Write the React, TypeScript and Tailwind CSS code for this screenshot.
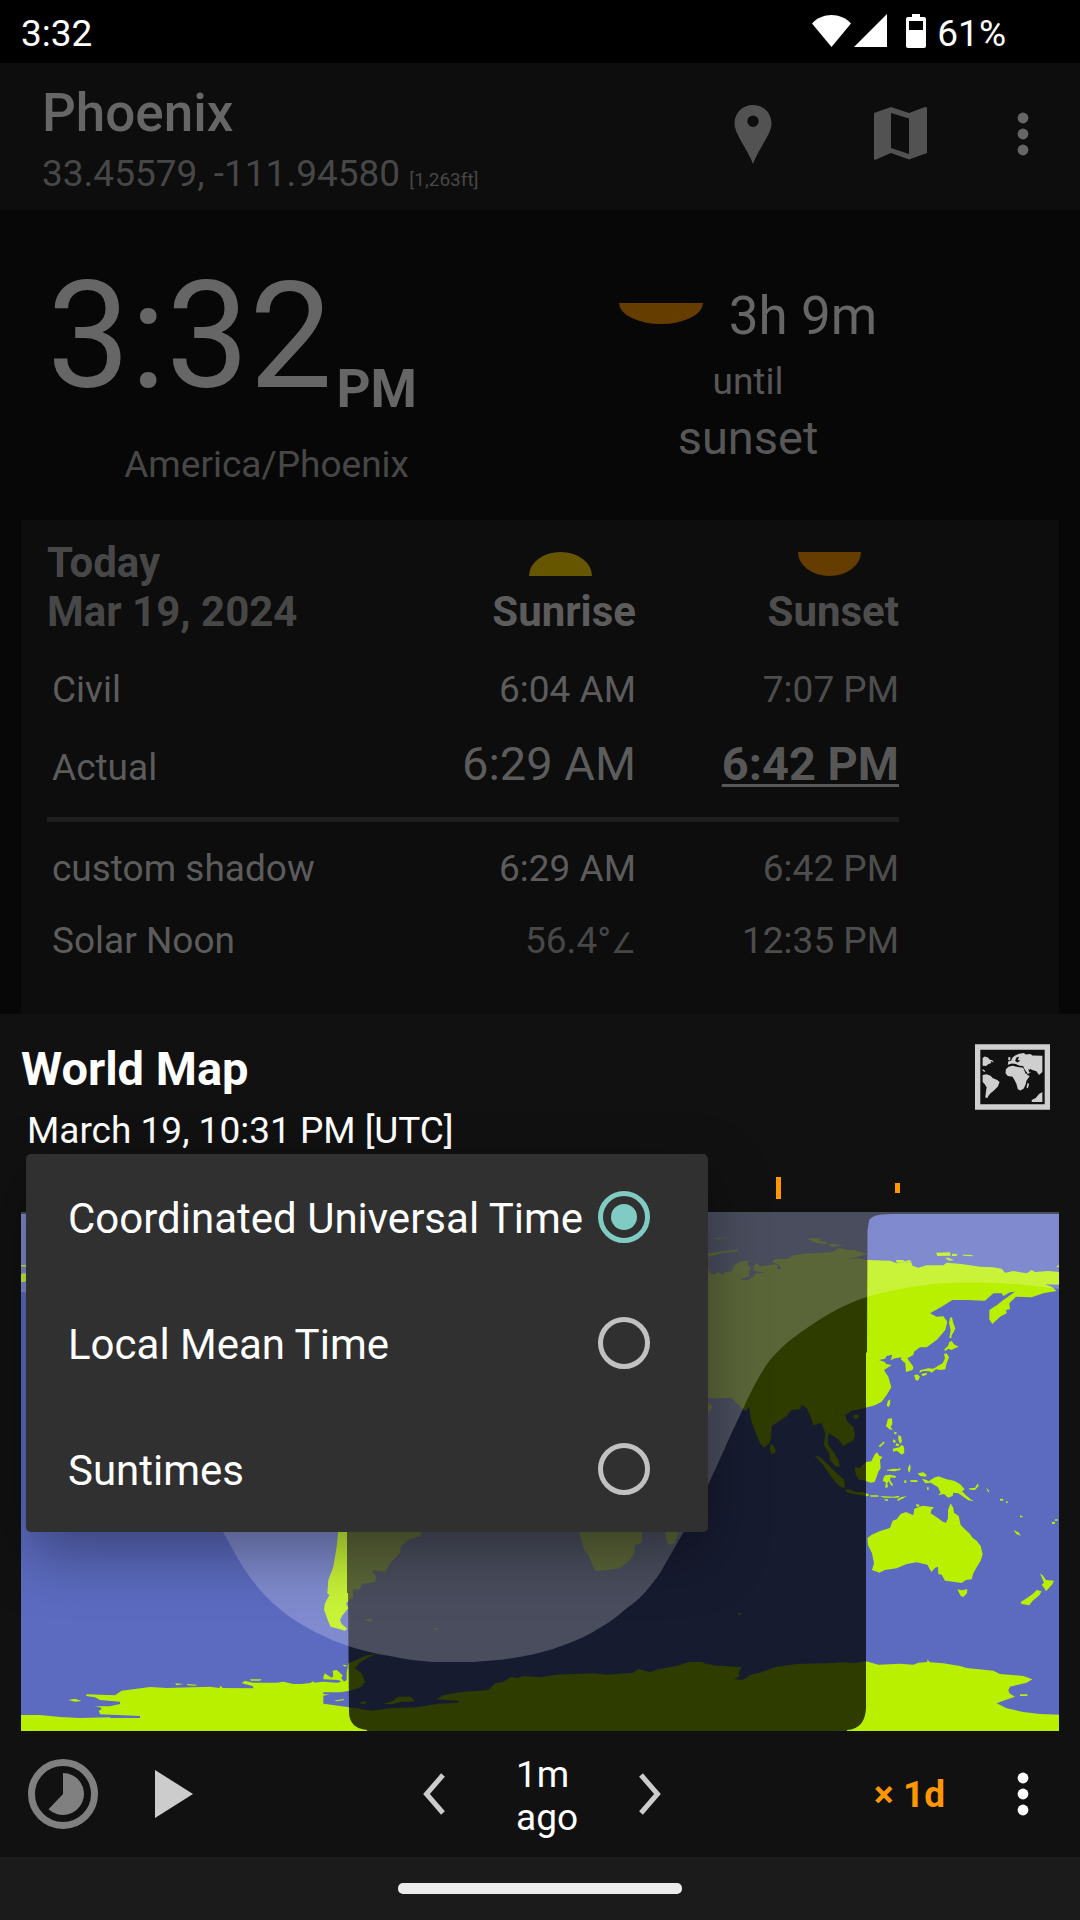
import { useState } from "react";

const zones = ["Coordinated Universal Time", "Local Mean Time", "Suntimes"];

function Dots({ className }: { className: string }) {
  return (
    <svg viewBox="0 0 12 44" className={"h-[44px] w-[12px] " + className} fill="currentColor">
      <circle cx="6" cy="6" r="5.4" />
      <circle cx="6" cy="22" r="5.4" />
      <circle cx="6" cy="38" r="5.4" />
    </svg>
  );
}

function StatusBar() {
  return (
    <div className="flex h-[63px] items-center bg-black pt-1 pr-[74px] pl-[21px] text-[37px] text-white">
      <span>3:32</span>
      <svg viewBox="0 0 114 36" className="-mt-1.5 ml-auto h-[36px] w-[114px]" fill="#fff">
        <path d="M0 10.500C10-1 29-1 39 10.500L19.500 34Z" />
        <path d="M75 1V34H42Z" />
        <path
          fillRule="evenodd"
          d="M100 1h8v3h4q2 0 2 2V33q0 2-2 2H96q-2 0-2-2V6q0-2 2-2h4ZM97 8v9h14V8Z"
        />
      </svg>
      <span className="ml-[11px]">61%</span>
    </div>
  );
}

function AppBar() {
  return (
    <header className="flex h-[147px] items-start bg-[#0d0d0d] pr-[51px] pl-[42px]">
      <div className="pt-5">
        <h1 className="text-[53px] leading-[60px] font-medium text-[#666]">Phoenix</h1>
        <p className="text-[37px] leading-[62px] text-[#474747]">
          33.45579, -111.94580 <span className="text-[19px]">[1,263ft]</span>
        </p>
      </div>
      <button type="button" aria-label="Location" className="mt-[42px] ml-auto">
        <svg viewBox="0 0 38 59" className="h-[59px] w-[38px]" fill="#525252">
          <path
            fillRule="evenodd"
            d="M19 0C8.500 0 .5 8 .5 18.500C.5 29 13 43 19 59C25 43 37.500 29 37.500 18.500C37.500 8 29.500 0 19 0ZM19 10.500a5.700 5.700 0 1 1 0 11.400a5.700 5.700 0 1 1 0-11.400Z"
          />
        </svg>
      </button>
      <button type="button" aria-label="Map" className="mt-[44px] ml-[102px]">
        <svg viewBox="0 0 53 53" className="h-[53px] w-[53px]" fill="#525252">
          <path
            fillRule="evenodd"
            d="M0 6L17 0L35 6L51 0Q53 0 53 1V46L35 52.500L17 46L2 52.500Q0 53 0 52ZM17 6V41L35 47V11.500Z"
          />
        </svg>
      </button>
      <button type="button" aria-label="More options" className="mt-[49px] ml-[90px]">
        <Dots className="text-[#666]" />
      </button>
    </header>
  );
}

function Setting({ className }: { className: string }) {
  return (
    <svg viewBox="0 0 84 21" preserveAspectRatio="none" className={className}>
      <path d="M0 0H84A42 21 0 0 1 0 0Z" fill="#663d00" />
    </svg>
  );
}

function Rising({ className }: { className: string }) {
  return (
    <svg viewBox="0 0 84 21" preserveAspectRatio="none" className={className}>
      <path d="M0 21H84A42 21 0 0 0 0 21Z" fill="#665600" />
    </svg>
  );
}

function Clock() {
  return (
    <section className="flex h-[310px] items-start px-[21px] text-[#666]">
      <div className="flex w-[416px] shrink-0 flex-col items-start pt-[41px] pl-[26px]">
        <div className="flex flex-col items-end">
          <div className="flex items-end gap-1">
            <span className="text-[148px] leading-[172px]">3:32</span>
            <span className="text-[53px] leading-[68px] font-bold">PM</span>
          </div>
          <p className="mt-[18px] pr-2 text-[37px] leading-[48px] text-[#474747]">America/Phoenix</p>
        </div>
      </div>
      <div className="flex flex-1 flex-col items-center pt-[76px]">
        <div className="flex items-center gap-[26px] text-[53px] leading-[60px]">
          <Setting className="mb-1.5 h-[21px] w-[84px]" />
          <span>3h 9m</span>
        </div>
        <p className="mt-3 text-[37px] leading-[48px] text-[#575757]">until</p>
        <p className="mt-1 text-[47px] leading-[56px] text-[#575757]">sunset</p>
      </div>
    </section>
  );
}

function SunTable() {
  return (
    <section className="mx-[21px] bg-[#0d0d0d] pt-[18px] pb-[37px] pl-[26px] text-[37px] text-[#5c5c5c]">
      <table className="w-[852px] table-fixed border-collapse">
        <colgroup>
          <col className="w-[325px]" />
          <col className="w-[264px]" />
          <col className="w-[263px]" />
        </colgroup>
        <thead>
          <tr className="text-[42px] leading-[49px]">
            <th className="pb-[18px] text-left align-bottom font-bold text-[#474747]">
              Today
              <br />
              Mar 19, 2024
            </th>
            <th className="pb-[18px] text-right align-bottom font-bold">
              <span className="inline-flex flex-col items-center align-bottom">
                <Rising className="mr-2 mb-[11px] h-[24px] w-[63px]" />
                Sunrise
              </span>
            </th>
            <th className="pb-[18px] text-right align-bottom font-bold text-[#4d4d4d]">
              <span className="inline-flex flex-col items-center align-bottom">
                <Setting className="mr-2 mb-[11px] h-[24px] w-[63px]" />
                Sunset
              </span>
            </th>
          </tr>
        </thead>
        <tbody>
          <tr className="h-[72px]">
            <th className="pl-[5px] text-left font-normal">Civil</th>
            <td className="text-right">6:04 AM</td>
            <td className="text-right text-[#4d4d4d]">7:07 PM</td>
          </tr>
          <tr className="h-[80px] align-baseline">
            <th className="pl-[5px] text-left font-normal">Actual</th>
            <td className="text-right text-[47px] leading-[76px]">6:29 AM</td>
            <td className="text-right text-[47px] leading-[76px] font-bold text-[#575757] underline decoration-3 underline-offset-4">
              6:42 PM
            </td>
          </tr>
          <tr>
            <td colSpan={3} className="h-[27px] p-0">
              <hr className="border-t-[5px] border-[#1f1f1f]" />
            </td>
          </tr>
          <tr className="h-[72px]">
            <th className="pl-[5px] text-left font-normal">custom shadow</th>
            <td className="text-right">6:29 AM</td>
            <td className="text-right text-[#4d4d4d]">6:42 PM</td>
          </tr>
          <tr className="h-[72px]">
            <th className="pl-[5px] text-left font-normal">Solar Noon</th>
            <td className="text-right text-[#474747]">
              56.4°<span className="text-[28px]">∠</span>
            </td>
            <td className="text-right text-[#4d4d4d]">12:35 PM</td>
          </tr>
        </tbody>
      </table>
    </section>
  );
}

function MapModeIcon() {
  return (
    <svg viewBox="103 72 226 198" className="h-[66px] w-[75px]" fill="#cfcfcf">
      <path fillRule="evenodd" d="M103 72H329V270H103ZM119 89V253H313V89Z" />
      <path d="M126 114L132 109L142 112L147 118L156 121L160 127L150 123L152 129L144 132L136 138L126 137Z" />
      <path d="M126 147L134 153L132 156L126 152Z" />
      <path d="M126 165L138 163L150 167L156 174L170 180L177 186L172 200L160 212L150 220L143 228L140 235L134 232L136 216L138 202L132 192L126 186Z" />
      <path d="M196 148L204 140L216 137L232 141L248 143L254 155L262 166L268 168L258 182L256 192L250 206L240 212L232 208L228 192L222 180L216 170L202 168L195 160Z" />
      <path d="M203 124L212 122L216 112L224 106L236 101L250 99L256 103L270 102L276 106L306 107V156L296 165L288 154L276 150L268 146L270 158L262 162L252 148L248 138L238 137L226 132L214 130L202 134Z" />
      <path d="M204 110L210 112L209 121L203 120Z" />
      <path d="M262 188L266 192L262 206L258 202Z" />
      <path d="M274 240L286 234L296 222L306 216V246H274Z" />
      <path d="M228 112L236 110L232 120L240 122L230 127L224 122ZM250 146L260 160L256 162ZM264 146L272 154L266 158Z" fill="#111" />
    </svg>
  );
}

function WorldMap() {
  return (
    <svg viewBox="0 0 1038 577" className="block w-full" role="img" aria-label="World map with daylight and moonlight">
      <g fill="#ff9800">
        <rect x="755" y="23" width="5" height="22" />
        <rect x="874" y="29" width="5" height="10" />
      </g>
      <g transform="translate(0 58)">
        <rect width="1038" height="519" fill="#5c6bc0" />
        <g fill="#b9f000">
          <path d="M0 62L3 61L8 63V69L2 70H0ZM0 53H8V54.500H0Z" />
          <g transform="translate(639 -62) scale(.33333)">
            <path d="M120 370L145 358L150 370L165 374L170 367L192 374L194 366L215 364L222 345L240 335L265 332L262 345L272 352L266 370L270 378L240 387L248 391L264 391L282 378L290 368L312 370L315 380L312 366L285 364L278 352L290 338L300 350L318 346L325 355L316 348L340 343L355 345L350 357L362 358L360 346L335 335L345 328L385 326L395 318L430 311L515 307L540 294L560 300L580 299L622 312L555 331L590 325L622 330L690 332L710 340L730 338L755 338L757 347L775 353L800 346L850 346L860 338L905 342L960 350L1000 352L1025 356L1035 368L1060 363L1100 370L1115 360L1125 366L1165 363L1198 366V404L1155 403L1175 410L1190 423L1150 430L1115 442L1068 440L1048 460L1050 478L1038 480L1040 490L1020 500L997 522L988 508V480L1010 466L1030 450L1065 425L1050 427L1030 438L1025 430L1000 430L975 452L920 450L877 450L845 470L810 490L830 500L850 499L862 515L856 540L830 570L800 592L780 592L762 605L760 615L742 625L747 632L760 650L758 660L738 666L736 640L722 628L725 622L705 625L692 630L697 614L680 618L675 626L657 630L675 636L678 642L695 645L672 660L685 680L694 712L680 735L665 755L645 766L622 772L600 778L575 782L556 795L560 812L580 832L585 855L580 870L550 888L535 868L508 850L503 862L505 885L520 905L535 930L540 950L525 948L510 930L508 910L492 885L496 850L484 818L460 826L452 800L440 775L425 765L420 778L395 780L380 798L335 828L333 865L328 880L312 893L300 880L280 830L270 795L268 772L255 783L230 760L215 744L150 745L120 742Z" />
            <path d="M120 745L145 760L157 772L144 788L120 790Z" />
            <path d="M130 312L180 305L232 299L235 304L190 308L144 321Z" />
            <path d="M442 268L460 263L480 266L478 273L502 276L500 283L470 278ZM505 284L520 281L550 287L530 289L515 290Z" />
            <path d="M160 265h24v2h-24ZM190 263h12v2h-12ZM828 308L870 307L872 317L832 318ZM876 311L892 312L890 318H876ZM907 314L938 315L937 319L910 317ZM855 324L866 323L882 331L868 332Z" />
            <path d="M708 330L728 330L735 334L750 330L755 338H710ZM1188 350L1197 345V352Z" />
            <path d="M870 503L876 502L880 520L886 535L880 548L875 555L874 565L868 563L872 540L867 520ZM868 576L875 573L882 583L896 590L885 595L875 600L865 596L855 604L853 598L864 588ZM852 612L860 610L867 622L860 640L856 658L842 660L828 658L815 668L808 664L790 663L778 668L780 661L805 655L820 656L838 645L848 640L855 625ZM762 676L772 673L780 680L774 692L767 690ZM784 672L800 668L800 674L788 679Z" />
            <path d="M684 752L691 748L690 764L685 772L680 766ZM582 795L594 793L598 800L588 808L579 801ZM684 806L696 805L697 822L692 830L698 840L688 838L678 828ZM703 845l8 3-3 5-6-2ZM715 856l8 3 3 16-6 6-5-12ZM700 868l8 5-3 6-7-4ZM708 880l10 3-2 6-9-2ZM656 888L672 874L674 878L660 892ZM698 896L718 892L725 884L732 890L733 908L726 914L710 902L700 905Z" />
            <path d="M332 882L340 886L347 900L344 910L333 912L330 896Z" />
          </g>
          <g transform="translate(639 218) scale(.33333)">
            <path d="M464 78L478 80L500 100L530 130L553 150L554 174L540 170L515 142L490 105L475 88Z" />
            <path d="M556 180L570 178L585 186L610 186L628 194L622 199L595 194L562 188ZM630 196H655L656 200H632ZM660 198L700 200L718 197L716 203H672ZM672 208L684 208V212H676ZM711 210L722 202L740 198L730 205L714 213Z" />
            <path d="M584 112L600 114L618 96L634 94L645 72L652 67L658 78L668 80L660 90L662 115L655 125L650 140L644 156L632 158L615 152L595 148L588 135Z" />
            <path d="M680 120L700 116L715 117L720 113L722 119L705 124L682 122ZM676 136L690 134L708 138L706 144L692 142L690 150L700 166L694 167L686 154L682 160L684 172L675 173L678 158L668 152L672 140Z" />
            <path d="M744 114L750 102L752 112L749 128L744 122ZM750 151L772 150V156H752ZM733 151h6v8h-6ZM801 172h5v7h-5Z" />
            <path d="M773 130L790 127L800 135L798 140L780 138ZM786 146L800 150L812 158L796 160ZM806 154L822 143L835 139L860 148L882 152L900 162L914 178L906 184L918 196L932 208L942 214L925 211L912 202L895 190L880 188L878 198L864 203L852 192L834 196L842 188L834 172L818 162ZM926 175L945 174L953 160L956 168L945 180L930 179ZM978 172L988 184L984 187ZM1020 206L1030 207V212H1020ZM1038 214h5v5h-5ZM1060 300L1075 307L1083 317L1070 313Z" />
            <path d="M763 236L788 227L822 232L814 240L812 250L828 260L850 276L858 278L864 265L864 240L872 220L880 234L882 248L896 258L902 285L915 298L930 312L938 324L950 332L962 348L968 372L962 392L950 412L940 430L935 448L918 450L905 459L885 456L855 452L845 434L835 432L834 410L825 414L814 426L802 404L770 397L740 402L710 415L675 420L658 428L636 420L642 400L636 370L624 345L622 325L635 314L660 303L690 294L698 272L710 268L722 252L738 246L760 256Z" />
            <path d="M892 478L905 481L922 478L921 490L910 501L902 498ZM768 222L778 224V230H770Z" />
            <path d="M1140 430L1148 436L1158 450L1182 452L1176 464L1165 476L1158 484L1154 476L1145 464L1152 458ZM1130 480L1145 484L1138 496L1118 512L1108 526L1085 522L1082 516L1100 505L1118 492ZM1175 276L1185 275L1184 282H1177ZM1185 268h8v4h-8ZM1080 256l8 3v3h-8ZM235 548h7v6h-7Z" />
            <path d="M-10 718L50 710L80 698L125 698L160 706L245 712L235 730L240 738L222 748L250 750L270 735L300 728L350 710L410 702L500 700L550 697L580 700L618 694L655 704L720 701L760 704L775 698L802 696V688L810 697L850 700L900 708L920 714L1000 722L1020 732L1090 738L1117 748L1100 758L1050 770L1045 780L1048 790L1065 800L1030 812L1010 820L1040 835L1090 846L1140 852L1198 854V904H-10ZM1080 793h22v5h-22Z" />
          </g>
          <g transform="translate(319 288) scale(.33333)">
            <path d="M-5 90L-10 140L-20 200L-35 240L-38 280L-32 285L-45 310L-48 330L-42 345L-35 365L-28 380L0 388L15 392L22 386L5 372L0 360L8 345L25 325L18 310L40 290L38 268L60 268L65 252L105 246L108 230L95 211L135 215L155 185L180 160L182 138L210 118L240 108L250 90Z" />
            <path d="M716 90L730 145L745 165L765 213L800 210L840 205L870 180L885 155L883 138L907 125L905 90ZM975 90L978 115L985 135L1003 130L1018 90ZM78 358h18v6H78ZM284 384h8v5h-8Z" />
            <path d="M-50 532L-46 520L-25 533L-20 528L-22 512L-10 510L8 526L4 534L12 545L20 540V520L25 490L50 480L75 468L110 461L80 475L58 488L45 505L65 520L75 545L65 560L30 572L0 577L-60 577L-75 580L-30 584L-60 588L-90 592L-120 594L-90 602L-60 610L0 618L50 625L95 632L150 625L230 622L290 612L355 608V602L290 598L310 586L360 577L445 570L465 550L490 545L515 530L530 535L550 528L600 532L650 524L760 520L800 524L880 518L895 507L930 517L950 510L1010 498L1050 486H1090V694H-200V560L-50 545L-10 548L5 545L-5 540L-50 538Z" />
            <path d="M130 612L160 602L175 590L212 590L225 604L180 606L160 612ZM57 611L70 604L80 606L75 612ZM-18 602L10 597L14 600L-10 604ZM7 494L22 496L15 500Z" />
          </g>
          <g transform="translate(-21 288) scale(.33333)">
            <path d="M63 645L120 645L180 651L240 654L330 652L330 654L420 654V648L300 643L296 632L306 627L300 622L283 619L330 619L360 612V605L300 600L285 592L258 588L260 583L345 586L365 572L450 561L500 564L630 560L658 564L662 557L668 564L760 565L758 558L725 550L735 542L758 548L830 548L850 545L880 552L925 552L940 544L945 553L970 550V694H63ZM205 600L225 596L245 603L225 605ZM525 550L550 552L530 556ZM562 552L590 554L588 557L562 556ZM750 538L785 538L780 542H752Z" />
          </g>
        </g>
        <path
          d="M0 0H1038V2H870Q850 2 848 9L846.500 18L846 140L845 141V496Q844 517 826 518V519H346V518Q328 516 328 500L327 381H326V2H0Z"
          fill="#000"
          fillOpacity=".75"
        />
        <path
          d="M0 0H1038V77C1014 74 1000 72 989 72C965 70 935 70 912 72C888 75 870 78 846 85C820 93 796 108 772 126C764 132 756 140 749 148C740 160 733 174 726 188C720 202 708 226 704 236L687 273L662 321L639 361C628 377 618 388 606 396C595 406 584 413 572 420C560 427 546 432 532 437C515 442 505 444 492 446C480 448 465 449 452 450H412C398 449 382 447 369 444C355 442 340 438 327 434C316 430 306 426 296 421C284 415 275 409 266 403C255 394 246 386 239 378C230 367 222 356 216 345L202 320C180 278 165 228 140 188C110 135 70 88 0 80Z"
          fill="#fff"
          fillOpacity=".22"
        />
      </g>
    </svg>
  );
}

function ZoneMenu() {
  const [zone, setZone] = useState(zones[0]);
  return (
    <div className="absolute top-0 left-[26px] w-[682px] rounded-[5px] bg-[#303030] shadow-[0_22px_60px_rgba(0,0,0,0.36)]">
      {zones.map((z) => (
        <label key={z} className="flex h-[126px] items-center justify-between pr-[58px] pl-[42px] text-[42px] text-white">
          <span className="pt-0.5">{z}</span>
          <input
            type="radio"
            name="zone"
            checked={z === zone}
            onChange={() => setZone(z)}
            className="size-[52px] shrink-0 appearance-none rounded-full border-[5px] border-[#c1c1c1] bg-clip-content p-2 checked:border-[#80cbc4] checked:bg-[#80cbc4]"
          />
        </label>
      ))}
    </div>
  );
}

function Controls() {
  return (
    <div className="grid h-[126px] grid-cols-[1fr_auto_1fr] items-center px-[28px] text-[37px] text-white">
      <div className="flex items-center gap-[57px]">
        <button type="button" aria-label="Reset time">
          <svg viewBox="0 0 70 70" className="h-[70px] w-[70px]">
            <circle cx="35" cy="35" r="31.500" fill="none" stroke="#808080" strokeWidth="7" />
            <path d="M35 14A21 21 0 1 1 20.500 50.200L35 35Z" fill="#808080" />
          </svg>
        </button>
        <button type="button" aria-label="Play">
          <svg viewBox="0 0 38 48" className="h-[48px] w-[38px]">
            <path d="M0 0L38 24L0 48Z" fill="#ccc" />
          </svg>
        </button>
      </div>
      <div className="flex items-center pl-1">
        <button type="button" aria-label="Back">
          <svg viewBox="0 0 22 42" className="h-[42px] w-[22px]" fill="none" stroke="#ccc" strokeWidth="5">
            <path d="M20 2L3.500 21L20 40" />
          </svg>
        </button>
        <p className="mx-[62px] w-[70px] pt-1 pl-[9px] leading-[43px]">
          1m
          <br />
          ago
        </p>
        <button type="button" aria-label="Forward">
          <svg viewBox="0 0 22 42" className="h-[42px] w-[22px]" fill="none" stroke="#ccc" strokeWidth="5">
            <path d="M2 2L18.500 21L2 40" />
          </svg>
        </button>
      </div>
      <div className="flex items-center justify-end pr-[23px]">
        <button type="button" className="pt-0.5 font-bold text-[#ff9800]">
          × 1d
        </button>
        <button type="button" aria-label="More map options" className="ml-[72px]">
          <Dots className="text-white" />
        </button>
      </div>
    </div>
  );
}

export default function App() {
  return (
    <div className="flex min-h-screen flex-col bg-[#070707] font-[Roboto,sans-serif]">
      <StatusBar />
      <AppBar />
      <Clock />
      <SunTable />
      <section className="bg-[#111]">
        <div className="flex h-[140px] items-start justify-between pr-[30px] pl-[21px] text-white">
          <div className="pt-[27px]">
            <h2 className="text-[47px] leading-[56px] font-bold">World Map</h2>
            <p className="mt-2 pl-1.5 text-[37px] leading-[52px]">March 19, 10:31 PM [UTC]</p>
          </div>
          <button type="button" aria-label="Map mode" className="mt-[30px]">
            <MapModeIcon />
          </button>
        </div>
        <div className="relative overflow-x-clip px-[21px]">
          <WorldMap />
          <ZoneMenu />
        </div>
        <Controls />
      </section>
      <footer className="flex min-h-[62px] flex-1 items-center justify-center bg-[#1b1b1b]">
        <div className="h-[11px] w-[284px] rounded-[5px] bg-[#ececec]" />
      </footer>
    </div>
  );
}
